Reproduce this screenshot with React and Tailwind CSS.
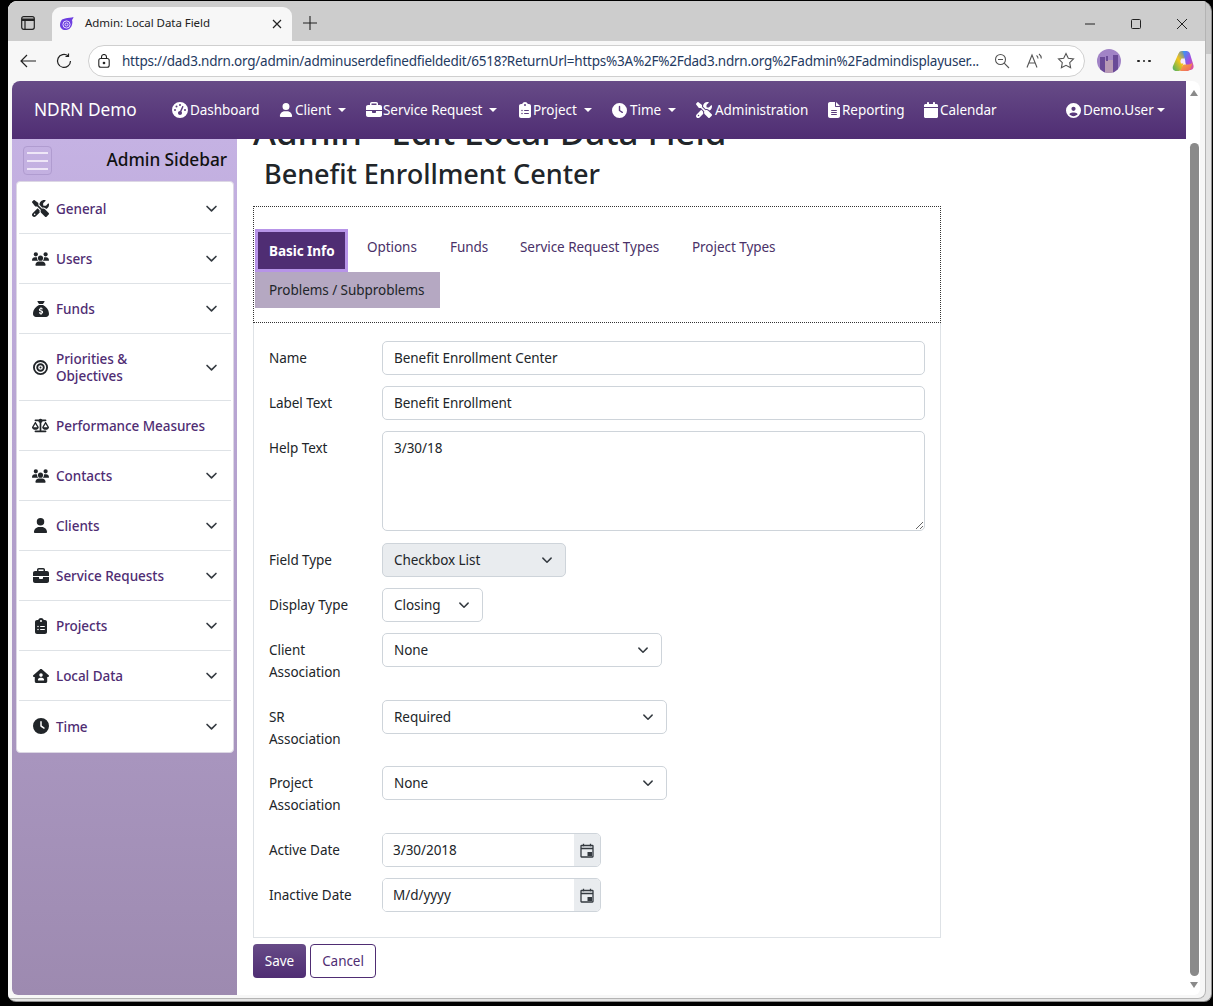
import React from "react";
import { FaScrewdriverWrench, FaUsers, FaBullseye, FaScaleBalanced, FaUser, FaBriefcase, FaClipboardList, FaHouseUser, FaClock, FaGaugeHigh, FaFileLines, FaCalendar, FaCircleUser, FaSackDollar } from "react-icons/fa6";

const Caret = ({ cls = "ml-[7px]" }) => (
  <span className={`inline-block w-0 h-0 border-l-[4.5px] border-r-[4.5px] border-t-[4.5px] border-l-transparent border-r-transparent border-t-white ${cls}`} />
);

const Chevron = ({ w = 14, color = "#343a40" }) => (
  <svg width={w} height={w} viewBox="0 0 16 16" fill="none" stroke={color} strokeWidth="2" strokeLinecap="round" strokeLinejoin="round" className="flex-none">
    <path d="M2.5 5.5 8 11l5.5-5.5" />
  </svg>
);

const NavItem = ({ icon: I, label, caret, w, size = 15, gap = 3, left = 0, caretCls }) => (
  <div className={`flex items-center flex-none text-white text-[13.5px] ${w}`}>
    <I size={size} className="flex-none" style={{ marginRight: gap, marginLeft: left }} />
    <span className="whitespace-nowrap">{label}</span>
    {caret && <Caret cls={caretCls} />}
  </div>
);

const SideItem = ({ icon: I, label, chevron = true, h = "h-[50px]", last, size = 17 }) => (
  <div className={`flex items-center mx-[2px] pl-[13px] pr-[13px] ${h} ${last ? "" : "border-b border-[#dee2e6]"}`}>
    <span className="w-[17px] flex justify-center flex-none text-[#212529]"><I size={size} /></span>
    <span className="ml-[7px] pt-[2px] flex-1 text-[13.5px] leading-[17px] font-medium text-[#4f2d73]">{label}</span>
    {chevron && <Chevron w={13} />}
  </div>
);

const Row = ({ label, children, h = "", mb = "mb-[11px]" }) => (
  <div className={`flex ${mb} ${h}`}>
    <label className="w-[113px] flex-none pt-[7px] whitespace-nowrap text-[13.5px] leading-[21.5px] text-[#212529]">{label}</label>
    {children}
  </div>
);

const inputCls = "h-[34px] border border-[#ced4da] rounded-[5px] bg-white px-[11px] text-[13.5px] text-[#212529] outline-none";

const Select = ({ value, w, bg = "bg-white" }) => (
  <div className={`flex items-center justify-between h-[34px] border border-[#ced4da] rounded-[5px] pl-[11px] pr-[12px] text-[13.5px] text-[#212529] ${w} ${bg}`}>
    <span className="pt-px">{value}</span>
    <Chevron w={12} />
  </div>
);

const CalIcon = () => (
  <svg width="14" height="15" viewBox="0 0 14 15" fill="none" stroke="#343a40" strokeWidth="1.3">
    <rect x="1" y="2.5" width="12" height="11.5" rx="0.5" />
    <path d="M1 5.5h12M3.5 .8v2.4M10.5 .8v2.4" />
    <rect x="7.5" y="9" width="4.5" height="4" fill="#343a40" stroke="none" />
  </svg>
);

const DateField = ({ value, placeholder }) => (
  <div className="flex h-[34px] w-[219px] border border-[#ced4da] rounded-[5px] overflow-hidden">
    <input readOnly value={value} placeholder={placeholder} className="flex-1 min-w-0 px-[10px] text-[13.5px] text-[#212529] placeholder:text-[#212529] placeholder:opacity-100 outline-none bg-white" />
    <span className="w-[26px] flex-none flex items-center justify-center bg-[#e9ecef]"><CalIcon /></span>
  </div>
);

const Favicon = () => (
  <svg width="16" height="16" viewBox="0 0 16 16" fill="none">
    <path d="M3 3.500 6 2.600c2.800-.9 6.500-.8 8.500-1.600-.3 1.600-1 2.400-1.500 3 1.300 3.500-.8 9.500-5.500 10C3.500 14.500 1 12 1 9c0-2 .8-4 2-5.500Z" fill="#6d3ee0" />
    <circle cx="7.500" cy="8.500" r="3.600" stroke="#e6dcff" strokeWidth="1" />
    <circle cx="7.500" cy="8.500" r="1.500" stroke="#e6dcff" strokeWidth="1" />
  </svg>
);

const Copilot = () => (
  <svg width="24" height="24" viewBox="0 0 24 24">
    <defs>
      <linearGradient id="cpA" x1="0" y1="1" x2="1" y2="0">
        <stop offset="0" stopColor="#3fb06a" /><stop offset=".5" stopColor="#f5c518" /><stop offset="1" stopColor="#2f7df0" />
      </linearGradient>
      <linearGradient id="cpB" x1="0" y1="0" x2="1" y2="1">
        <stop offset="0" stopColor="#2f9df5" /><stop offset=".55" stopColor="#a24be0" /><stop offset="1" stopColor="#f0578a" />
      </linearGradient>
      <linearGradient id="cpC" x1="0" y1="0" x2="1" y2="1">
        <stop offset="0" stopColor="#f7b733" /><stop offset="1" stopColor="#ef5a6b" />
      </linearGradient>
    </defs>
    <path d="M7.500 4.500C8.200 2.800 9.300 2 11 2h4.500L11 19.500C10.400 21 9.300 22 7.500 22H5.500C2.500 22 1 19.800 2 17Z" fill="url(#cpA)" />
    <path d="M12 2h3.500c1.700 0 2.800.9 3.400 2.500L22.400 16c.8 2.800-.7 5-3.400 5h-3L12 2Z" fill="url(#cpB)" />
    <path d="M9 22h7.500c1.700 0 2.700-.9 3.300-2.400l1.800-5.600c-1.700 1.300-3.300 1.500-5.600 1.500h-2.500c-1.200 0-1.800.6-2.100 1.500Z" fill="url(#cpC)" />
    <path d="M10.500 9.500h3l.8 2.500-1.200 2.500h-3.200l-.6-2.500Z" fill="#f6ecff" />
  </svg>
);

const Avatar = () => (
  <svg width="24" height="24" viewBox="0 0 24 24" className="flex-none">
    <clipPath id="avc"><circle cx="12" cy="12" r="12" /></clipPath>
    <g clipPath="url(#avc)">
      <rect width="24" height="24" fill="#a183c6" />
      <rect x="3" y="8" width="5" height="16" fill="#6a4a97" />
      <rect x="16" y="6" width="5" height="18" fill="#6a4a97" />
      <rect x="8" y="11" width="8" height="13" fill="#b89ab5" />
      <rect x="9" y="7" width="2" height="5" fill="#6a4a97" />
    </g>
  </svg>
);

export default function App() {
  return (
    <div className="w-[1213px] h-[1006px] bg-black overflow-hidden pl-[8px] pt-px tracking-[-0.05px] font-['Noto_Sans',sans-serif]">
      <div className="w-[1204px] h-[1001px] rounded-tl-[9px] rounded-tr-[10px] rounded-b-[8px] bg-[linear-gradient(#c8c8c8_53px,#e4e4e4_53px)] overflow-hidden border-b border-r border-[#8f8f8f]">
        <div className="w-[1198px] h-[998px] bg-[#f7f7f7] rounded-br-[8px] overflow-hidden flex flex-col border-r border-b border-[#b4b4b4]">
          {/* tab strip */}
          <div className="h-[40px] flex-none bg-[#cdcdcd] flex items-end">
            <svg width="14" height="14" viewBox="0 0 14 14" fill="none" stroke="#222" strokeWidth="1.200" className="ml-[13px] mb-[11px] flex-none">
              <rect x=".7" y=".7" width="12.600" height="12.600" rx="2" />
              <path d="M.7 3.800h12.600" strokeWidth="2.400" />
              <path d="M4 3.800v9.500" />
            </svg>
            <div className="ml-[17px] w-[240px] h-[34px] bg-[#f7f7f7] rounded-t-[9px] flex items-center pl-[7px] pr-[8px]">
              <Favicon />
              <span className="ml-[10px] mb-[2px] flex-1 text-[11.500px] text-[#222] whitespace-nowrap">Admin: Local Data Field</span>
              <svg width="10" height="10" viewBox="0 0 10 10" stroke="#222" strokeWidth="1.200" className="mr-[2px]"><path d="M1 1l8 8M9 1l-8 8" /></svg>
            </div>
            <svg width="14" height="14" viewBox="0 0 14 14" stroke="#222" strokeWidth="1.100" className="ml-[11px] mb-[11px]"><path d="M7 0v14M0 7h14" /></svg>
            <div className="ml-auto flex items-center mb-[12px] pr-[18px]">
              <svg width="10" height="10" viewBox="0 0 10 10" stroke="#222" strokeWidth="1"><path d="M0 5h10" /></svg>
              <svg width="10" height="10" viewBox="0 0 10 10" stroke="#222" strokeWidth="1" fill="none" className="ml-[36px]"><rect x=".5" y=".5" width="9" height="9" rx="1" /></svg>
              <svg width="10" height="10" viewBox="0 0 10 10" stroke="#222" strokeWidth="1" className="ml-[36px]"><path d="M0 0l10 10M10 0L0 10" /></svg>
            </div>
          </div>
          {/* toolbar */}
          <div className="h-[40px] flex-none flex items-center">
            <svg width="16" height="14" viewBox="0 0 16 14" fill="none" stroke="#222" strokeWidth="1.200" className="ml-[12px] flex-none"><path d="M16 7H1M7 1 1 7l6 6" /></svg>
            <svg width="16" height="16" viewBox="0 0 16 16" fill="none" stroke="#222" strokeWidth="1.200" className="ml-[20px] flex-none"><path d="M14.500 8A6.500 6.500 0 1 1 12 2.800M12.500 .5v3h-3" /></svg>
            <div className="ml-[16px] w-[997px] h-[32px] rounded-full bg-white border border-[#cfcfcf] flex items-center pl-[9px] pr-[10px] flex-none">
              <svg width="12" height="14" viewBox="0 0 12 14" fill="none" stroke="#222" strokeWidth="1.100" className="flex-none"><rect x=".8" y="4.500" width="10.400" height="8.800" rx="2" /><path d="M3.500 4.500V3a2.500 2.500 0 0 1 5 0v1.500" /><circle cx="6" cy="9" r=".8" fill="#222" /></svg>
              <span className="ml-[12px] w-[861px] flex-none text-[13.500px] tracking-[-0.23px] text-[#1f3a5f] whitespace-nowrap overflow-hidden">https://dad3.ndrn.org/admin/adminuserdefinedfieldedit/6518?ReturnUrl=https%3A%2F%2Fdad3.ndrn.org%2Fadmin%2Fadmindisplayuser...</span>
              <svg width="16" height="16" viewBox="0 0 16 16" fill="none" stroke="#555" strokeWidth="1.100" className="ml-[11px] flex-none"><circle cx="6.500" cy="6.500" r="5" /><path d="M4 6.500h5M10.200 10.200l4.800 4.800" /></svg>
              <svg width="17" height="16" viewBox="0 0 17 16" fill="none" stroke="#555" strokeWidth="1.100" className="ml-[16px] flex-none"><path d="M1 14.500 6 2l5 12.500M2.800 10h6.400M10.500 2.500c1 .7 1.500 1.700 1.500 3M13 1c1.500 1.100 2.300 2.700 2.300 4.500" /></svg>
              <svg width="18" height="18" viewBox="0 0 18 18" fill="none" stroke="#555" strokeWidth="1.100" className="ml-[14px] flex-none"><path d="M9 1.500l2.300 4.800 5.200.7-3.800 3.600.9 5.200L9 13.300l-4.600 2.500.9-5.200L1.500 7l5.200-.7Z" /></svg>
            </div>
            <span className="ml-[12px]"><Avatar /></span>
            <span className="ml-[16px] flex gap-[3px]">
              <i className="w-[2.500px] h-[2.500px] rounded-full bg-[#222]" /><i className="w-[2.500px] h-[2.500px] rounded-full bg-[#222]" /><i className="w-[2.500px] h-[2.500px] rounded-full bg-[#222]" />
            </span>
            <span className="ml-[20px]"><Copilot /></span>
          </div>
          {/* page */}
          <div className="ml-[4px] w-[1188px] h-[914px] bg-white rounded-t-[8px] rounded-b-[6px] overflow-hidden flex flex-none">
            <div className="w-[1174px] flex-none flex flex-col">
              <nav className="h-[58px] flex-none flex items-center bg-gradient-to-b from-[#674b87] to-[#4f2d73] relative z-10 pl-[22px]">
                <span className="w-[138px] flex-none text-[17.300px] text-white whitespace-nowrap">NDRN Demo</span>
                <NavItem icon={FaGaugeHigh} label="Dashboard" w="w-[107px]" size={16} gap={2} />
                <NavItem icon={FaUser} label="Client" caret w="w-[87px]" size={14} gap={2} />
                <NavItem icon={FaBriefcase} label="Service Request" caret w="w-[153px]" size={16} gap={1} />
                <NavItem icon={FaClipboardList} label="Project" caret w="w-[93px]" size={16} gap={0} left={-2} />
                <NavItem icon={FaClock} label="Time" caret w="w-[84px]" size={15} gap={3} />
                <NavItem icon={FaScrewdriverWrench} label="Administration" w="w-[132px]" size={16} gap={3} />
                <NavItem icon={FaFileLines} label="Reporting" w="w-[96px]" size={16} gap={0} left={-2} />
                <NavItem icon={FaCalendar} label="Calendar" w="w-[142px]" size={16} gap={1} left={-1} />
                <NavItem icon={FaCircleUser} label="Demo.User" caret w="w-[100px]" size={15} gap={2} caretCls="ml-[3px]" />
              </nav>
              <div className="flex-1 flex min-h-0">
                <aside className="w-[225px] flex-none bg-gradient-to-b from-[#c5b2e3] to-[#9d8ab0] px-[3px]">
                  <div className="h-[42px] flex items-start pt-[7px] pl-[8px] pr-[7px] justify-between">
                    <div className="w-[29px] h-[29px] border border-[#b09cd0] rounded-[4px] flex flex-col items-center justify-center gap-[6px]">
                      <i className="w-[21px] h-[2px] bg-[#eee6f7]" /><i className="w-[21px] h-[2px] bg-[#eee6f7]" /><i className="w-[21px] h-[2px] bg-[#eee6f7]" />
                    </div>
                    <span className="text-[17.300px] leading-[27px] font-medium text-[#111] whitespace-nowrap">Admin Sidebar</span>
                  </div>
                  <div className="ml-px w-[218px] bg-white rounded-[4px] border border-[#dcd7e4] pt-[2px] pb-px">
                    <SideItem icon={FaScrewdriverWrench} label="General" />
                    <SideItem icon={FaUsers} label="Users" size={18} />
                    <SideItem icon={FaSackDollar} label="Funds" size={16} />
                    <SideItem icon={FaBullseye} label={<>Priorities &<br />Objectives</>} h="h-[67px]" size={15} />
                    <SideItem icon={FaScaleBalanced} label="Performance Measures" chevron={false} size={17} />
                    <SideItem icon={FaUsers} label="Contacts" size={18} />
                    <SideItem icon={FaUser} label="Clients" size={15} />
                    <SideItem icon={FaBriefcase} label="Service Requests" size={16} />
                    <SideItem icon={FaClipboardList} label="Projects" size={16} />
                    <SideItem icon={FaHouseUser} label="Local Data" size={16} />
                    <SideItem icon={FaClock} label="Time" size={16} last />
                  </div>
                </aside>
                <main className="flex-1 overflow-hidden pl-[16px]">
                  <h1 className="-mt-[28px] text-[35px] leading-[42px] font-medium text-[#212529] whitespace-nowrap">Admin - Edit Local Data Field</h1>
                  <h2 className="mt-[4px] ml-[11px] text-[27.100px] leading-[34px] font-medium text-[#212529] whitespace-nowrap">Benefit Enrollment Center</h2>
                  <div className="mt-[15px] w-[688px] h-[117px] border border-dotted border-[#333] pt-[22px] pl-px">
                    <div className="flex items-start">
                      <div className="w-[93px] h-[43px] flex-none bg-[#4f2d73] border-[3px] border-[#b794e8] flex items-center pl-[11px] pt-px text-[13.500px] font-bold text-white">Basic Info</div>
                      <div className="ml-[3px] w-[83px] h-[36px] flex-none flex items-center pl-[16px] text-[13.500px] text-[#4a3168]">Options</div>
                      <div className="w-[70px] h-[36px] flex-none flex items-center pl-[16px] text-[13.500px] text-[#4a3168]">Funds</div>
                      <div className="w-[172px] h-[36px] flex-none flex items-center pl-[16px] text-[13.500px] text-[#4a3168] whitespace-nowrap">Service Request Types</div>
                      <div className="h-[36px] flex-none flex items-center pl-[16px] text-[13.500px] text-[#4a3168] whitespace-nowrap">Project Types</div>
                    </div>
                    <div className="w-[185px] h-[36px] bg-[#b5a8c2] flex items-center pl-[14px] text-[13.500px] text-[#212529] whitespace-nowrap">Problems / Subproblems</div>
                  </div>
                  <div className="w-[688px] h-[615px] border-x border-b border-[#dee2e6] pt-[18px] pl-[15px]">
                    <Row label="Name"><input readOnly value="Benefit Enrollment Center" className={`${inputCls} w-[543px]`} /></Row>
                    <Row label="Label Text"><input readOnly value="Benefit Enrollment" className={`${inputCls} w-[543px]`} /></Row>
                    <Row label="Help Text" mb="mb-[12px]"><textarea readOnly value="3/30/18" className="h-[100px] w-[543px] border border-[#ced4da] rounded-[5px] bg-white px-[11px] py-[6px] text-[13.500px] leading-[21px] text-[#212529] outline-none" /></Row>
                    <Row label="Field Type"><Select value="Checkbox List" w="w-[184px]" bg="bg-[#e9ecef]" /></Row>
                    <Row label="Display Type"><Select value="Closing" w="w-[101px]" /></Row>
                    <Row label={<>Client<br />Association</>} h="h-[56px]"><Select value="None" w="w-[280px]" /></Row>
                    <Row label={<>SR<br />Association</>} h="h-[55px]"><Select value="Required" w="w-[285px]" /></Row>
                    <Row label={<>Project<br />Association</>} h="h-[56px]"><Select value="None" w="w-[285px]" /></Row>
                    <Row label="Active Date"><DateField value="3/30/2018" /></Row>
                    <Row label="Inactive Date"><DateField value="" placeholder="M/d/yyyy" /></Row>
                  </div>
                  <div className="mt-[6px] flex gap-[4px]">
                    <button className="w-[53px] h-[34px] rounded-[4px] bg-gradient-to-b from-[#674b87] to-[#4f2d73] text-white text-[13.500px]">Save</button>
                    <button className="w-[66px] h-[34px] rounded-[4px] bg-white border border-[#4f2d73] text-[#4f2d73] text-[13.500px]">Cancel</button>
                  </div>
                </main>
              </div>
            </div>
            {/* scrollbar */}
            <div className="w-[14px] flex-none flex flex-col items-center pl-[2px]">
              <i className="mt-[9px] w-0 h-0 border-l-[4.500px] border-r-[4.500px] border-b-[6px] border-l-transparent border-r-transparent border-b-[#8a8a8a]" />
              <div className="mt-[47px] w-[9px] h-[833px] rounded-full bg-[#8a8a8a]" />
              <i className="mt-[6px] w-0 h-0 border-l-[4.500px] border-r-[4.500px] border-t-[6px] border-l-transparent border-r-transparent border-t-[#8a8a8a]" />
            </div>
          </div>
        </div>
      </div>
    </div>
  );
}
